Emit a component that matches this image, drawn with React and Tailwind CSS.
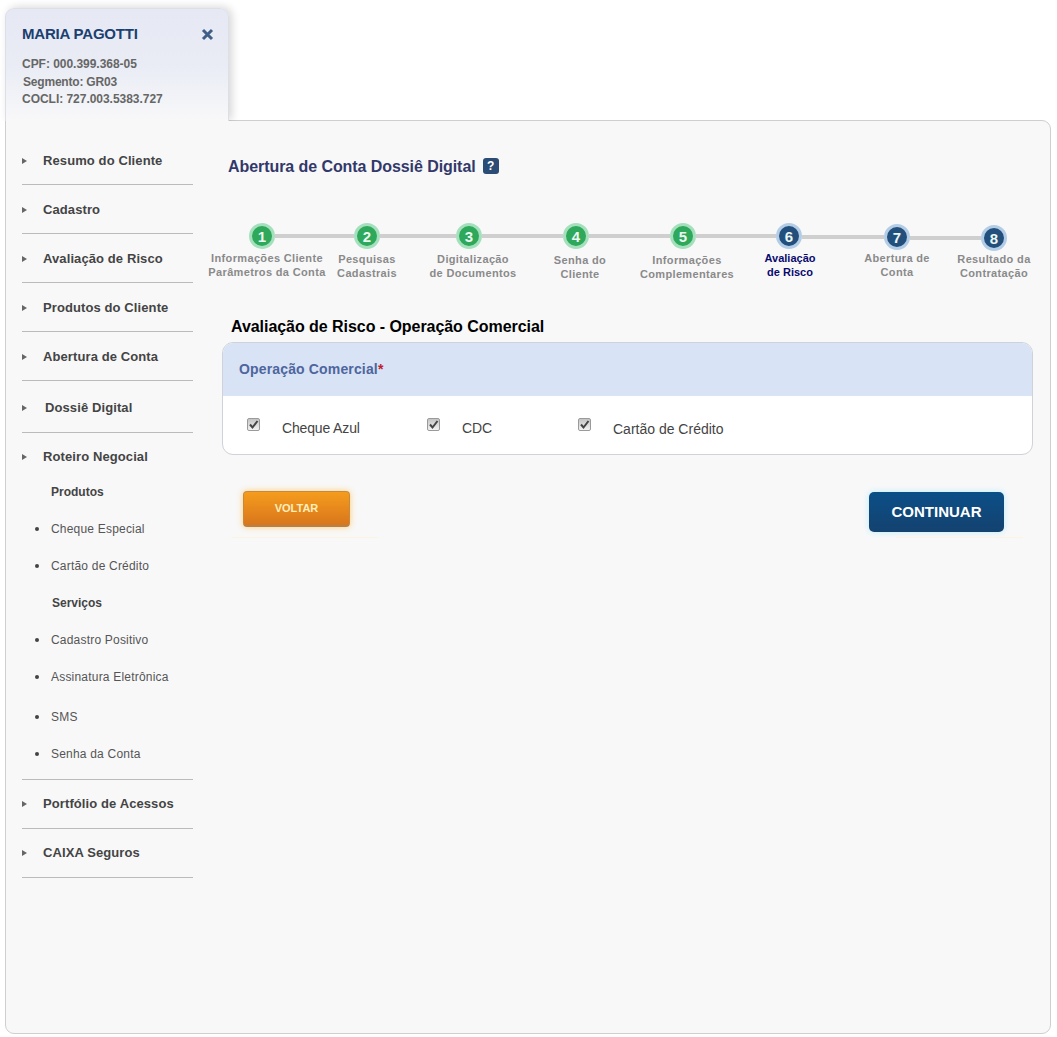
function Tri() {
  return <svg width="5" height="6" viewBox="0 0 5 6" className="shrink-0"><path d="M0 0L5 3L0 6Z" fill="#666" /></svg>;
}
function NavRow({ label, shift, h = 'h-[49px]', y = 'pt-[16px]', border = true }) {
  return (
    <div className={`${h} ${y} ${border ? 'border-b border-[#bbb]' : ''} flex items-start`}>
      <div className="w-[21px] h-[18px] flex items-center"><Tri /></div>
      <span className={`text-[13px] leading-[18px] font-bold text-[#444] tracking-[0.1px] ${shift ? 'ml-[2px]' : ''}`}>{label}</span>
    </div>
  );
}
function Sub({ label, bold, h = 'h-[37px]', ml = 'ml-[29px]', extra = '' }) {
  return (
    <div className={`${h} ${extra} flex items-center`}>
      {!bold && <span className="ml-[13px] w-[16px] flex"><span className="w-[4px] h-[4px] rounded-full bg-[#444]" /></span>}
      <span className={`${bold ? `font-bold text-[#444] ${ml}` : 'text-[#555] tracking-[0.2px]'} text-[12px] leading-[16px]`}>{label}</span>
    </div>
  );
}
function Circle({ n, done, mt }) {
  return (
    <div className={`${mt} w-[26px] h-[26px] rounded-full shrink-0 flex items-center justify-center border-[3px] ${done ? 'bg-[#2ea85a] border-[#a5e0bd]' : 'bg-[#234f7d] border-[#b4cde6]'}`}>
      <span className="text-[#eaf6f0] text-[15px] leading-none font-bold">{n}</span>
    </div>
  );
}
function Line({ w, mt }) {
  return <div className={`${w} ${mt} h-[4px] bg-[#cfcfcf] shrink-0`} />;
}
function Label({ a, b, w, mt, active }) {
  return (
    <div className={`${w} ${mt} shrink-0 flex flex-col items-center text-[11px] leading-[14px] font-bold whitespace-nowrap ${active ? 'text-[#0a0a6e] tracking-[0px]' : 'text-[#8a8a8a] tracking-[0.35px]'}`}>
      <div>{a}</div><div>{b}</div>
    </div>
  );
}
function Check() {
  return (
    <span className="w-[13px] h-[13px] rounded-[2px] border border-[#9a9a9a] bg-gradient-to-b from-[#c4c4c4] to-[#f2f2f2] flex items-center justify-center shrink-0">
      <svg width="11" height="11" viewBox="0 0 11 11"><path d="M2 5.5L4.5 8.5L9.5 2" fill="none" stroke="#444" strokeWidth="2" /></svg>
    </span>
  );
}
export default function App() {
  return (
    <div className="w-[1057px] h-[1037px] bg-white pt-[8px] pl-[5px] overflow-hidden" style={{ fontFamily: '"Liberation Sans", Arial, sans-serif' }}>
      <div className="relative z-10 w-[224px] h-[113px] -mb-px rounded-t-[9px] border border-b-0 border-[#dcdfe6] bg-gradient-to-b from-[#e6e9f3] via-[#e9ecf5] to-[#f8f8f9] shadow-[3px_-1px_8px_rgba(0,0,0,0.16)] [clip-path:inset(-12px_-12px_0_-12px)] pl-[16px] pr-[14px] pt-[14px]">
        <div className="flex items-center justify-between h-[22px]">
          <span className="text-[15px] leading-[22px] font-bold text-[#1b4070] tracking-[-0.2px]">MARIA PAGOTTI</span>
          <svg width="13" height="13" viewBox="0 0 13 13"><path d="M2 2L11 11M11 2L2 11" stroke="#3f5f88" strokeWidth="3" /></svg>
        </div>
        <div className="mt-[10px] text-[12px] font-bold text-[#666] tracking-[-0.03px]">
          <div className="leading-[18px]">CPF: 000.399.368-05</div>
          <div className="leading-[18px] ml-[1px] tracking-[-0.2px]">Segmento: GR03</div>
          <div className="leading-[17px]">COCLI: 727.003.5383.727</div>
        </div>
      </div>
      <div className="relative w-[1046px] h-[914px] rounded-[9px] rounded-tl-none border border-[#cfcfcf] bg-[#f8f8f9] flex pl-[16px]">
        <div className="w-[171px] shrink-0 pt-[15px]">
          <NavRow label="Resumo do Cliente" />
          <NavRow label="Cadastro" />
          <NavRow label="Avaliação de Risco" />
          <NavRow label="Produtos do Cliente" />
          <NavRow label="Abertura de Conta" />
          <NavRow label="Dossiê Digital" shift h="h-[52px]" y="pt-[18px]" />
          <NavRow label="Roteiro Negocial" border={false} h="h-[40px]" y="pt-[15px]" />
          <Sub label="Produtos" bold />
          <Sub label="Cheque Especial" />
          <Sub label="Cartão de Crédito" />
          <Sub label="Serviços" bold ml="ml-[30px]" />
          <Sub label="Cadastro Positivo" />
          <Sub label="Assinatura Eletrônica" />
          <Sub label="SMS" h="h-[39px]" extra="mt-[2px]" />
          <Sub label="Senha da Conta" h="h-[36px]" />
          <div className="h-[8px] border-b border-[#bbb]" />
          <NavRow label="Portfólio de Acessos" y="pt-[15px]" />
          <NavRow label="CAIXA Seguros" y="pt-[15px]" />
        </div>
        <div className="w-[811px] ml-[29px] shrink-0">
          <div className="mt-[35px] ml-[6px] flex items-center h-[22px]">
            <span className="text-[16px] leading-[22px] font-bold text-[#33386a] tracking-[-0.07px]">Abertura de Conta Dossiê Digital</span>
            <span className="ml-[7px] -mt-[2px] w-[16px] h-[16px] rounded-[3px] bg-[#2b4c74] text-white text-[12px] leading-none font-bold flex items-center justify-center">?</span>
          </div>
          <div className="mt-[45px] ml-[27px] flex items-start h-[28px]">
            <Circle n="1" done mt="mt-[0px]" /><Line w="w-[79px]" mt="mt-[11px]" />
            <Circle n="2" done mt="mt-[0px]" /><Line w="w-[76px]" mt="mt-[11px]" />
            <Circle n="3" done mt="mt-[0px]" /><Line w="w-[81px]" mt="mt-[11px]" />
            <Circle n="4" done mt="mt-[0px]" /><Line w="w-[81px]" mt="mt-[11px]" />
            <Circle n="5" done mt="mt-[0px]" /><Line w="w-[80px]" mt="mt-[11px]" />
            <Circle n="6" mt="mt-[0px]" /><Line w="w-[82px]" mt="mt-[12px]" />
            <Circle n="7" mt="mt-[1px]" /><Line w="w-[71px]" mt="mt-[13px]" />
            <Circle n="8" mt="mt-[2px]" />
          </div>
          <div className="flex items-start h-[44px] -mt-[7px] -ml-[15px]">
            <Label a="Informações Cliente" b="Parâmetros da Conta" w="w-[120px]" mt="mt-[7px]" />
            <Label a="Pesquisas" b="Cadastrais" w="w-[80px]" mt="mt-[8px]" />
            <Label a="Digitalização" b="de Documentos" w="w-[132px]" mt="mt-[8px]" />
            <Label a="Senha do" b="Cliente" w="w-[82px]" mt="mt-[9px]" />
            <Label a="Informações" b="Complementares" w="w-[132px]" mt="mt-[9px]" />
            <Label a="Avaliação" b="de Risco" w="w-[74px]" mt="mt-[7px]" active />
            <Label a="Abertura de" b="Conta" w="w-[140px]" mt="mt-[7px]" />
            <Label a="Resultado da" b="Contratação" w="w-[54px]" mt="mt-[8px]" />
          </div>
          <div className="mt-[29px] ml-[9px] text-[16px] leading-[20px] font-bold text-black tracking-[-0.05px]">Avaliação de Risco - Operação Comercial</div>
          <div className="mt-[5px] h-[113px] rounded-[11px] border border-[#cfd2d8] bg-white overflow-hidden">
            <div className="h-[53px] bg-[#d8e3f5] pl-[16px] flex items-center text-[14px] font-bold text-[#4e659d] tracking-[0.15px]">Operação Comercial<span className="text-[#c0202a]">*</span></div>
            <div className="pl-[24px] flex items-start text-[14px] leading-[18px] text-[#444]">
              <span className="mt-[22px]"><Check /></span>
              <span className="ml-[22px] mt-[23px] w-[145px] tracking-[-0.15px]">Cheque Azul</span>
              <span className="mt-[22px]"><Check /></span>
              <span className="ml-[22px] mt-[23px] w-[116px] tracking-[-0.15px]">CDC</span>
              <span className="mt-[22px]"><Check /></span>
              <span className="ml-[22px] mt-[24px]">Cartão de Crédito</span>
            </div>
          </div>
          <div className="mt-[36px] flex items-start justify-between pl-[21px] pr-[29px]">
            <button className="w-[107px] h-[36px] rounded-[4px] bg-gradient-to-b from-[#f59c1d] to-[#d8761c] border border-[#c8893f] border-b-2 border-b-[#b88048] shadow-[0_0_6px_rgba(255,200,100,0.9)] text-[11px] font-bold text-[#ffeebb] flex items-center justify-center pb-[1px]">VOLTAR</button>
            <button className="mt-[1px] w-[135px] h-[40px] rounded-[5px] bg-gradient-to-b from-[#0a4f88] to-[#13426f] shadow-[0_0_6px_rgba(170,235,250,0.8)] text-[15px] font-bold text-white flex items-center justify-center">CONTINUAR</button>
          </div>
          <div className="mt-[5px] flex justify-between pl-[10px] pr-[10px]">
            <div className="w-[146px] h-px bg-[#fdf3e0]" />
            <div className="w-[127px] h-px bg-[#fdf3e0]" />
          </div>
        </div>
      </div>
    </div>
  );
}
